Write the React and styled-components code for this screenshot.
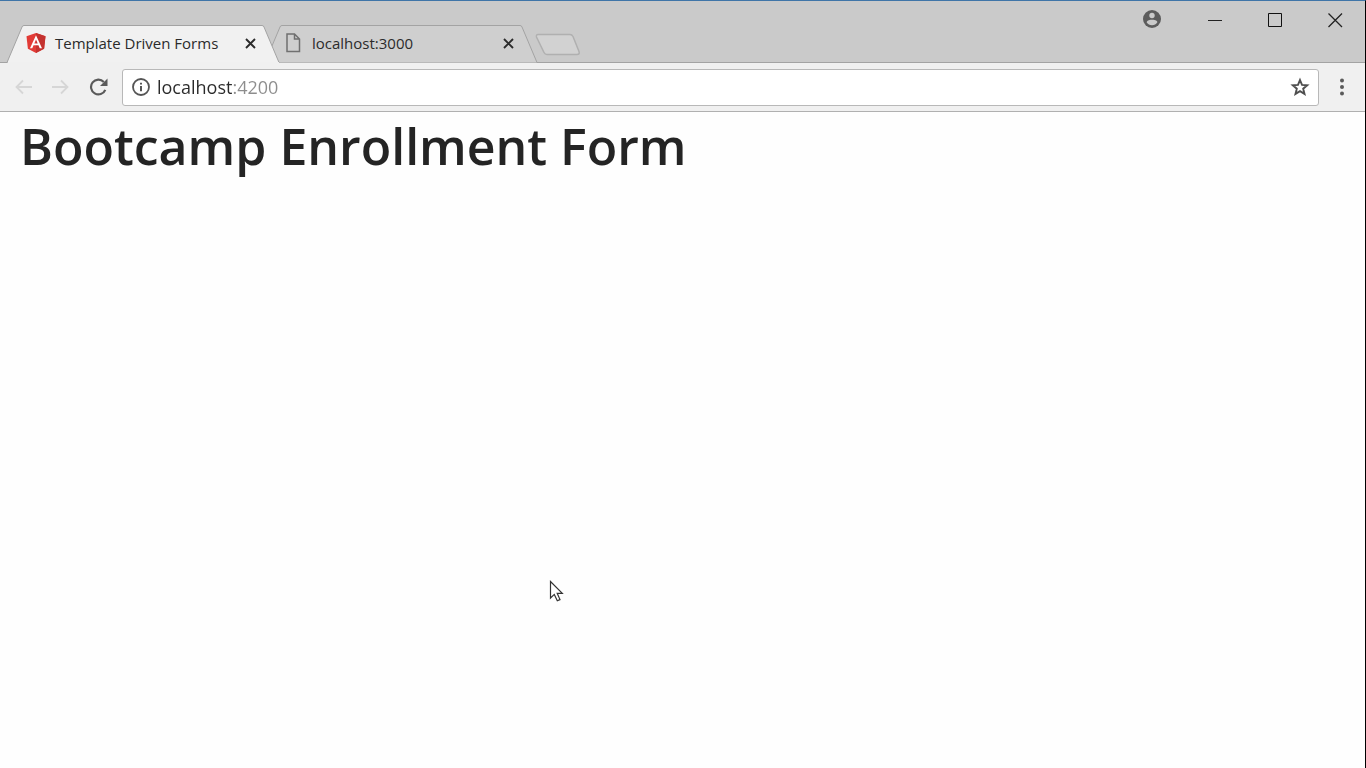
import React from "react";
import styled, { createGlobalStyle } from "styled-components";

const GlobalStyle = createGlobalStyle`
  * { box-sizing: border-box; }
  body { margin: 0; background: #fefefe; font-family: "Open Sans", "Noto Sans", sans-serif; }
  button { padding: 0; border: 0; background: none; font: inherit; color: inherit; }
  svg { display: block; }
`;

const Window = styled.div`
  display: flex;
  flex-direction: column;
  min-height: 100vh;
  border-top: 1px solid #3f75a8;
  border-right: 1px solid #000;
  background: #fefefe;
`;

const TitleBar = styled.header`
  display: flex;
  justify-content: space-between;
  height: 62px;
  background: #cacaca;
  box-shadow: inset 0 -1px #a3a3a3;
`;

const TabStrip = styled.nav`
  display: flex;
  align-items: flex-end;
  padding-left: 6px;
`;

const Tab = styled.div`
  position: relative;
  z-index: ${(p) => (p.$active ? 1 : 0)};
  display: flex;
  align-items: center;
  width: 276px;
  height: 38px;
  margin-right: -18px;
  padding: 0 23px 2px 20px;
`;

const TabShape = styled.svg`
  position: absolute;
  inset: 0;
  z-index: -1;
`;

const TabLink = styled.a`
  display: flex;
  flex: 1;
  align-items: center;
  gap: 9px;
  color: #2b2b2b;
  font-size: 15px;
  line-height: 20px;
  text-decoration: none;
  white-space: nowrap;
`;

const TabClose = styled.button`
  display: grid;
  place-items: center;
  width: 17px;
  height: 17px;
`;

const NewTab = styled.button`
  width: 50px;
  height: 24px;
  margin: 0 0 6px 11px;
`;

const WindowControls = styled.div`
  display: flex;
  height: 38px;
`;

const WindowButton = styled.button`
  display: grid;
  place-items: center;
  width: ${(p) => (p.$wide ? 66 : 60)}px;
  height: 38px;
`;

const Toolbar = styled.div`
  display: flex;
  align-items: center;
  height: 49px;
  padding: 0 11px 0 12px;
  border-bottom: 1px solid #b0b0b0;
  background: #f0f0f0;
`;

const NavButtons = styled.div`
  display: flex;
  gap: 13px;
  margin-right: 12px;
`;

const IconButton = styled.button`
  display: grid;
  place-items: center;
  width: 24px;
  height: 24px;
`;

const AddressBar = styled.form`
  display: flex;
  flex: 1;
  align-items: center;
  height: 37px;
  margin-right: 11px;
  padding: 0 6px;
  border: 1px solid #b8b8b8;
  border-radius: 3px;
  background: #fff;
`;

const AddressInput = styled.input`
  flex: 1;
  min-width: 0;
  height: 28px;
  margin-left: 4px;
  padding: 0;
  border: 0;
  outline: 0;
  font: 18px/28px "Open Sans", "Noto Sans", sans-serif;
  color: transparent;
  background: linear-gradient(90deg, #2a2a2a 75px, #8d8d8d 75px);
  background-clip: text;
`;

const Page = styled.main`
  flex: 1;
  padding: 2px 20px;
`;

const Heading = styled.h1`
  margin: 0;
  color: #242424;
  font-size: 50px;
  font-weight: 600;
  line-height: 64px;
`;

const Pointer = styled.svg`
  position: absolute;
  left: 549px;
  top: 580px;
`;

const CloseGlyph = () => (
  <svg width="11" height="11" viewBox="0 0 11 11" stroke="#2b2b2b" strokeWidth="1.900">
    <path d="M1 1l9 9M10 1l-9 9" />
  </svg>
);

function BrowserTab({ icon, title, href, active }) {
  return (
    <Tab $active={active}>
      <TabShape width="276" height="38" aria-hidden="true">
        <path
          d="M1 37.500L16 2Q16.500 .5 18 .5H256Q257.500 .5 258 2L273 37.500"
          fill={active ? "#f1f1f1" : "#cfcfcf"}
          stroke="#a3a3a3"
        />
        {active && <path d="M2 37.500H273" stroke="#f0f0f0" />}
      </TabShape>
      <TabLink href={href} aria-current={active ? "page" : undefined}>
        {icon}
        {title}
      </TabLink>
      <TabClose aria-label="Close tab">
        <CloseGlyph />
      </TabClose>
    </Tab>
  );
}

const AngularIcon = () => (
  <svg width="20" height="22" viewBox="0 0 21 22">
    <path d="M10.500 .5L20.500 4L19 17L10.500 21.500L2 17L.5 4Z" fill="#e23b36" />
    <path d="M10.500 .5L20.500 4L19 17L10.500 21.500Z" fill="#c4322f" />
    <path d="M10.500 2.800L4.200 16.500H6.600L7.900 13.400H13.100L14.400 16.500H16.800ZM10.500 7.200L12.300 11.400H8.700Z" fill="#fff" fillRule="evenodd" />
  </svg>
);

const FileIcon = () => (
  <svg width="19" height="20" viewBox="-1 0 19 20" fill="none" stroke="#707070" strokeWidth="1.500">
    <path d="M2 1H9.500L14.500 6V18.500H2ZM9.500 1V6H14.500" />
  </svg>
);

export default function App() {
  return (
    <Window>
      <GlobalStyle />
      <TitleBar>
        <TabStrip aria-label="Tabs">
          <BrowserTab active icon={<AngularIcon />} title="Template Driven Forms" href="#forms" />
          <BrowserTab icon={<FileIcon />} title="localhost:3000" href="#local" />
          <NewTab aria-label="New tab">
            <svg width="50" height="24" viewBox="0 0 50 24">
              <path d="M5 1.500H37Q39 1.500 40 3.500L46 18.500Q47 21.500 44 21.500H14Q12 21.500 11 19.500L3.500 4Q3 1.500 5 1.500Z" fill="#d2d2d2" stroke="#b0b0b0" strokeWidth="1.500" />
            </svg>
          </NewTab>
        </TabStrip>
        <WindowControls>
          <WindowButton $wide aria-label="Profile">
            <svg width="18" height="20" viewBox="0 0 18 20">
              <circle cx="9" cy="9" r="9" fill="#5c5c5c" />
              <circle cx="9" cy="5.500" r="2.700" fill="#cacaca" />
              <path d="M3.600 12.200C4 10.300 7 9.700 9 9.700S14 10.300 14.400 12.200C13.200 14.100 11.300 15.200 9 15.200S4.800 14.100 3.600 12.200Z" fill="#cacaca" />
            </svg>
          </WindowButton>
          <WindowButton aria-label="Minimize">
            <svg width="15" height="15" viewBox="0 0 15 15" stroke="#222">
              <path d="M0 7.500H14" />
            </svg>
          </WindowButton>
          <WindowButton aria-label="Maximize">
            <svg width="15" height="15" viewBox="0 0 15 15" fill="none" stroke="#111">
              <path d="M.5 .5H13.500V13.500H.5Z" />
            </svg>
          </WindowButton>
          <WindowButton aria-label="Close">
            <svg width="15" height="15" viewBox="0 0 15 15" stroke="#222" strokeWidth="1.300">
              <path d="M.5 .5L14 14M14 .5L.5 14" />
            </svg>
          </WindowButton>
        </WindowControls>
      </TitleBar>
      <Toolbar>
        <NavButtons>
          <IconButton aria-label="Back">
            <svg width="18" height="16" viewBox="0 0 18 16" fill="none" stroke="#d6d6d6" strokeWidth="1.800">
              <path d="M17 8H1.500M8 1.500L1.500 8L8 14.500" />
            </svg>
          </IconButton>
          <IconButton aria-label="Forward">
            <svg width="18" height="16" viewBox="0 0 18 16" fill="none" stroke="#d6d6d6" strokeWidth="1.800">
              <path d="M0 8H15.500M9 1.500L15.500 8L9 14.500" />
            </svg>
          </IconButton>
          <IconButton aria-label="Reload">
            <svg width="19" height="18" viewBox="0 0 19 18">
              <path d="M16.300 11.800A7.400 7.400 0 1 1 14.800 3.900" fill="none" stroke="#5a5a5a" strokeWidth="2.200" />
              <path d="M18.500 .5V8H11Z" fill="#5a5a5a" />
            </svg>
          </IconButton>
        </NavButtons>
        <AddressBar>
          <IconButton type="button" aria-label="Site information">
            <svg width="18" height="18" viewBox="0 0 18 18">
              <circle cx="9" cy="9" r="8" fill="none" stroke="#555" strokeWidth="1.800" />
              <path d="M9 8V13.300M9 4.700V6.600" stroke="#555" strokeWidth="2" />
            </svg>
          </IconButton>
          <AddressInput aria-label="Address" defaultValue="localhost:4200" />
          <IconButton type="button" aria-label="Bookmark this page">
            <svg width="20" height="20" viewBox="0 0 20 20">
              <path d="M10 3L12 7.900L17.200 8.300L13.200 11.700L14.500 16.900L10 14.100L5.500 16.900L6.800 11.700L2.800 8.300L8 7.900Z" fill="none" stroke="#4f4f4f" strokeWidth="1.900" />
            </svg>
          </IconButton>
        </AddressBar>
        <IconButton aria-label="Menu">
          <svg width="6" height="18" viewBox="0 0 6 18" fill="#5a5a5a">
            <circle cx="3" cy="2.500" r="2" />
            <circle cx="3" cy="9" r="2" />
            <circle cx="3" cy="15.500" r="2" />
          </svg>
        </IconButton>
      </Toolbar>
      <Page>
        <Heading>Bootcamp Enrollment Form</Heading>
      </Page>
      <Pointer width="15" height="23" viewBox="0 0 15 23" aria-hidden="true">
        <path d="M1.500 1.500V18L5.300 14.400L8.300 20.800L11 19.600L8.200 13.300H13.300Z" fill="#fff" stroke="#333" strokeWidth="1.200" />
      </Pointer>
    </Window>
  );
}
